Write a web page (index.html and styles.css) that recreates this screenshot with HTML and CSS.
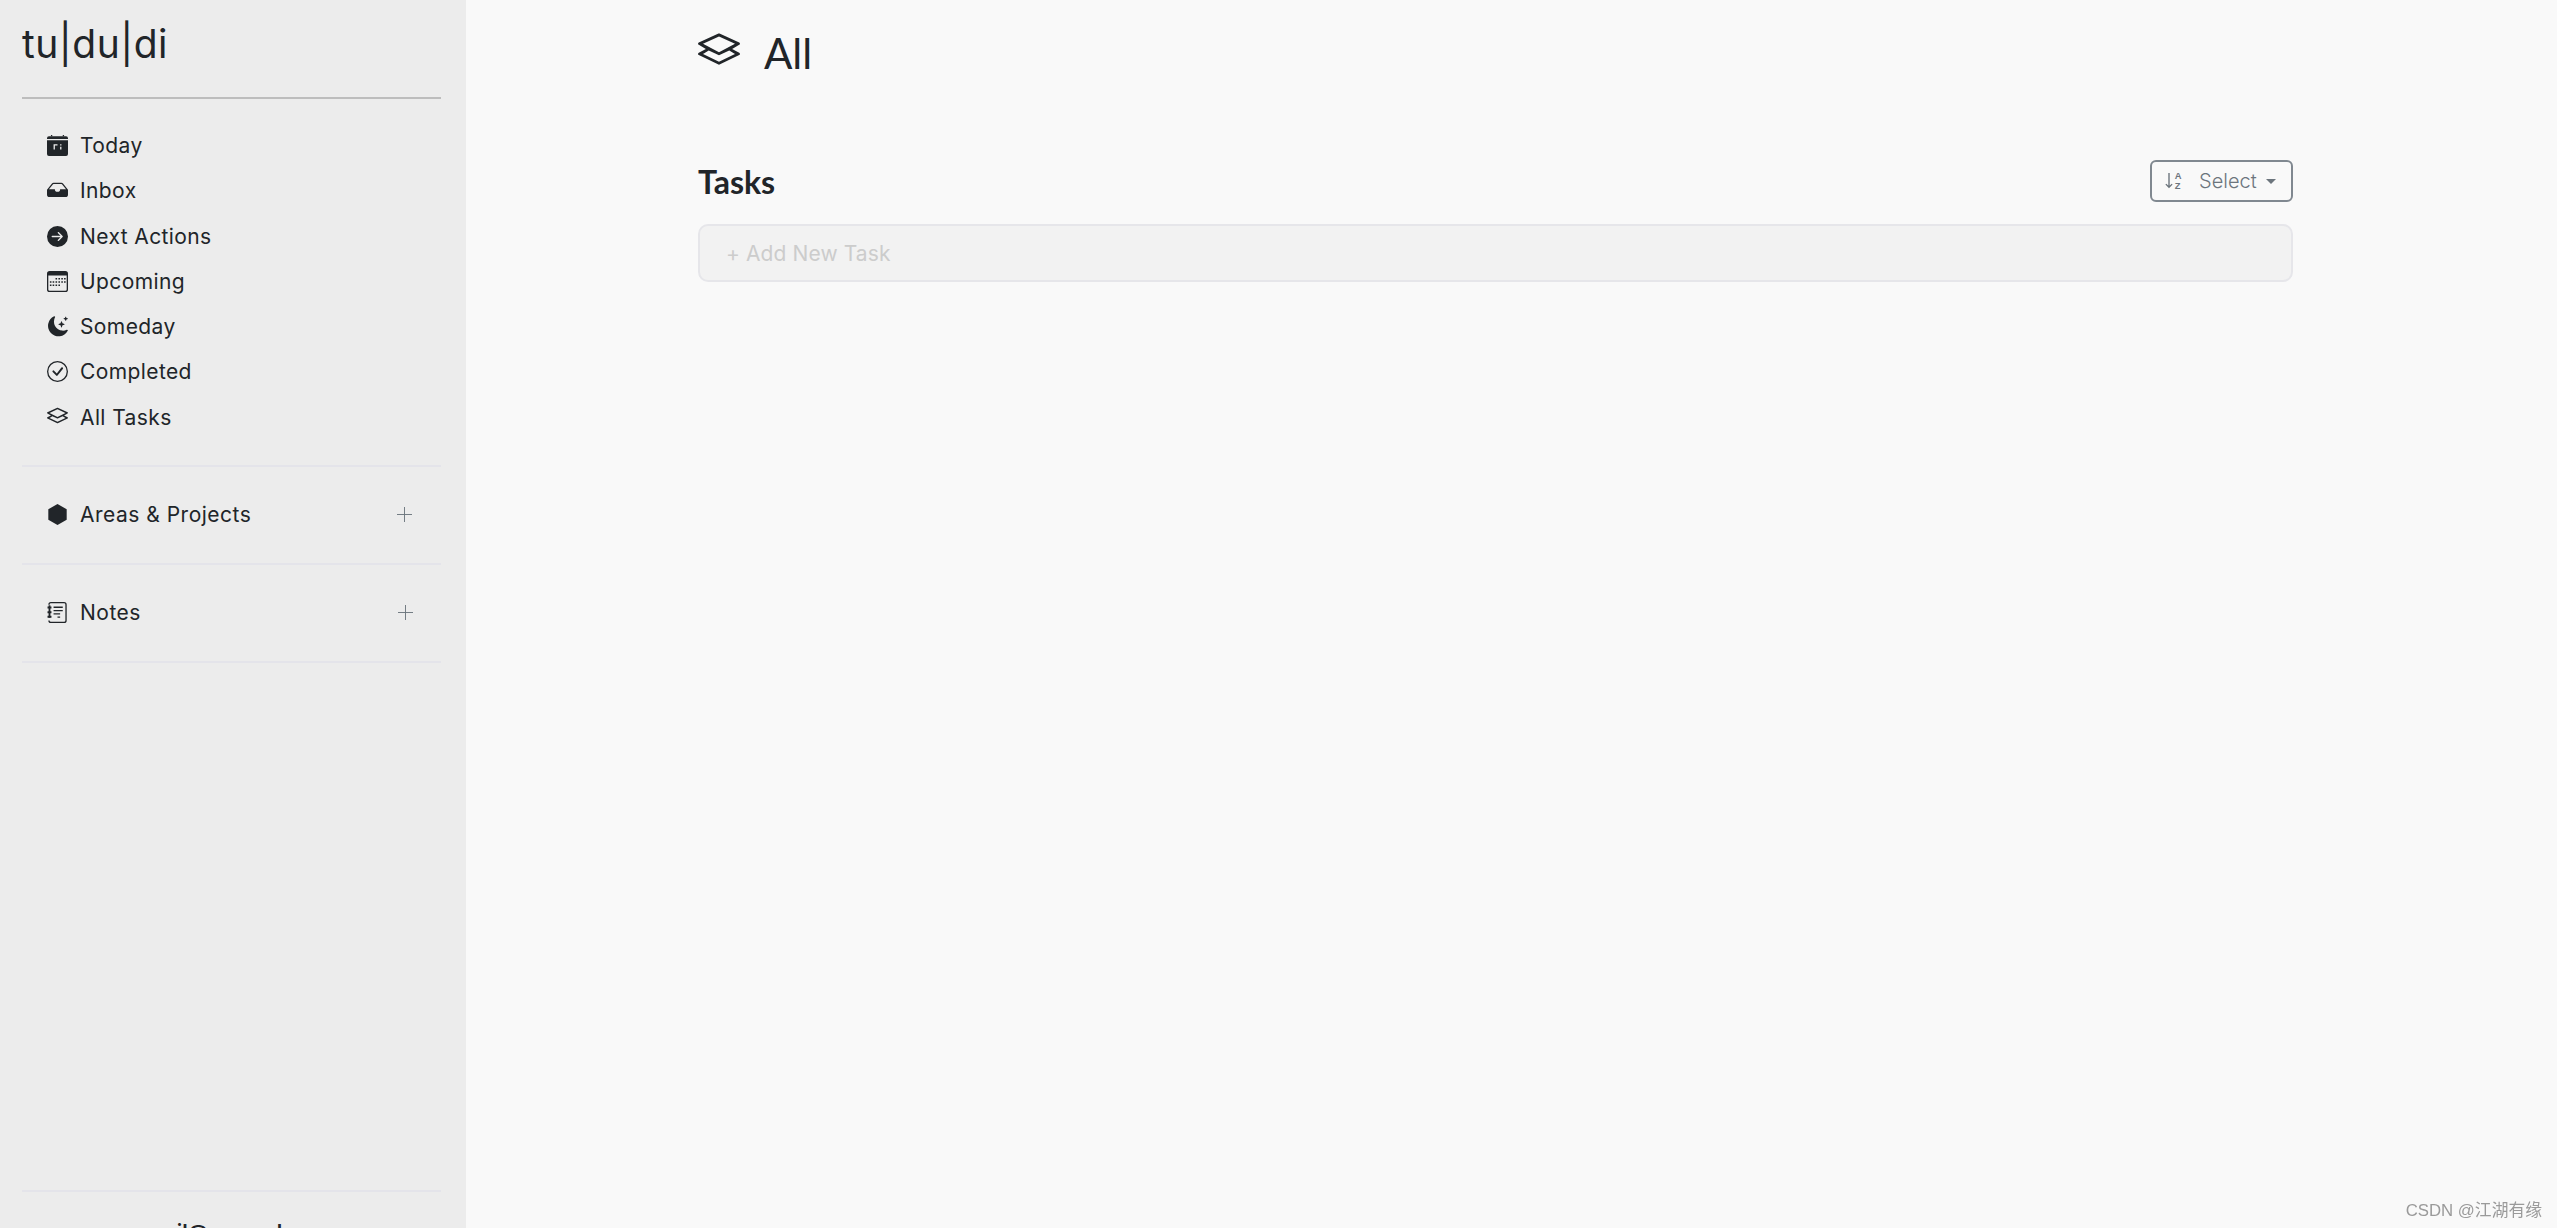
FILE: index.html
```html
<!DOCTYPE html>
<html lang="en">
<head>
  <meta charset="UTF-8">
  <title>tududi</title>
  <link rel="stylesheet" href="styles.css">
</head>
<body>
  <div class="app">
    <aside class="sidebar">
      <div class="logo">tu|du|di</div>
      <ul class="nav">
        <li class="nav-item">
          <svg class="icon" viewBox="0 0 16 16"><path d="M3 0h1v1H3zM12 0h1v1h-1z"/><path d="M0 2.500A1.500 1.500 0 0 1 1.500 1h13A1.500 1.500 0 0 1 16 2.500V3H0z"/><path fill-rule="evenodd" d="M0 4h16v10.500a1.500 1.500 0 0 1-1.500 1.500h-13A1.500 1.500 0 0 1 0 14.500zM5 7v4h1V8h2V7zM10 7v1h1V7zM10 9v2h1V9z"/></svg>
          <span>Today</span>
        </li>
        <li class="nav-item">
          <svg class="icon" viewBox="0 0 16 16"><path fill-rule="evenodd" d="M3.800 2.600A1.500 1.500 0 0 1 5 2h6a1.500 1.500 0 0 1 1.200.6L16 7.500V11a2 2 0 0 1-2 2H2a2 2 0 0 1-2-2V7.500zM5 3a.5.5 0 0 0-.4.2L1.500 7H6a2 2 0 0 0 4 0h4.500l-3.100-3.800A.5.5 0 0 0 11 3z"/></svg>
          <span>Inbox</span>
        </li>
        <li class="nav-item">
          <svg class="icon" viewBox="0 0 16 16"><path fill-rule="evenodd" d="M8 0a8 8 0 1 1 0 16A8 8 0 0 1 8 0zM4 7.500a.5.5 0 0 0 0 1h6.300l-2.100 2.150a.5.5 0 0 0 .7.7l3-3a.5.5 0 0 0 0-.7l-3-3a.5.5 0 0 0-.7.7l2.100 2.150z"/></svg>
          <span>Next Actions</span>
        </li>
        <li class="nav-item">
          <svg class="icon" viewBox="0 0 16 16"><path fill-rule="evenodd" d="M2 0h12a2 2 0 0 1 2 2v12a2 2 0 0 1-2 2H2a2 2 0 0 1-2-2V2a2 2 0 0 1 2-2zM1 3.500V14a1 1 0 0 0 1 1h12a1 1 0 0 0 1-1V3.500z"/><path d="M6.500 5.300h1.200v1.200H6.500zM8.700 5.300h1.200v1.200H8.700zM10.900 5.300h1.200v1.200h-1.200zM13 5.300h1.200v1.200H13zM2.200 7.800h1.200V9H2.200zM4.300 7.800h1.200V9H4.300zM6.500 7.800h1.200V9H6.500zM8.700 7.800h1.200V9H8.700zM10.900 7.800h1.200V9h-1.200zM13 7.800h1.200V9H13zM2.200 10.300h1.200v1.200H2.200zM4.300 10.300h1.200v1.200H4.300zM6.500 10.300h1.200v1.200H6.500zM8.700 10.300h1.200v1.200H8.700z"/></svg>
          <span>Upcoming</span>
        </li>
        <li class="nav-item">
          <svg class="icon" viewBox="0 0 16 16"><path d="M6 .3a.6.6 0 0 1 .1.7A7 7 0 0 0 5.300 4.300a6.800 6.800 0 0 0 9.700 6.200.6.600 0 0 1 .8.800A8 8 0 1 1 5.400.2.600.6 0 0 1 6 .3z"/><path d="M10.800 4.200a.3.300 0 0 1 .5 0l.5 1.400 1.400.5a.3.300 0 0 1 0 .5l-1.400.5-.5 1.400a.3.300 0 0 1-.5 0l-.5-1.400-1.400-.5a.3.300 0 0 1 0-.5l1.400-.5zM14 .5h.5l.3 1 1 .3v.5l-1 .3-.3 1H14l-.3-1-1-.3v-.5l1-.3z"/></svg>
          <span>Someday</span>
        </li>
        <li class="nav-item">
          <svg class="icon" viewBox="0 0 16 16"><path fill-rule="evenodd" d="M8 0a8 8 0 1 1 0 16A8 8 0 0 1 8 0zm0 1a7 7 0 1 0 0 14A7 7 0 0 0 8 1z"/><path d="M10.970 5.000a.75.75 0 0 1 1.070 1.050l-3.990 5a.75.75 0 0 1-1.080.020L4.320 8.420a.75.75 0 0 1 1.060-1.060l2.100 2.100 3.470-4.430z"/></svg>
          <span>Completed</span>
        </li>
        <li class="nav-item">
          <svg class="icon" viewBox="0 0 16 16"><path fill-rule="evenodd" d="M8.200.6a.5.5 0 0 0-.4 0L.3 4a.5.5 0 0 0 0 .9L3 6.500.3 7.900a.5.5 0 0 0 0 .9l7.500 3.600a.5.5 0 0 0 .4 0l7.500-3.600a.5.500 0 0 0 0-.9L13 6.500l2.700-1.600a.5.500 0 0 0 0-.9zM8 1.700l6.100 2.800L8 7.700 1.900 4.500zM4.100 7l3.700 1.800a.5.500 0 0 0 .4 0L11.900 7l2.200 1.400L8 11.300 1.900 8.400z"/></svg>
          <span>All Tasks</span>
        </li>
      </ul>
      <div class="section">
        <svg class="icon" viewBox="0 0 16 16"><path d="M8 0l7 4v8l-7 4-7-4V4z"/></svg>
        <span>Areas &amp; Projects</span>
        <svg class="plus" viewBox="0 0 16 16"><path d="M8 0v16M0 8h16"/></svg>
      </div>
      <div class="section">
        <svg class="icon" viewBox="0 0 16 16"><path fill-rule="evenodd" d="M3 0h10a2 2 0 0 1 2 2v12a2 2 0 0 1-2 2H3a2 2 0 0 1-2-2h1a1 1 0 0 0 1 1h10a1 1 0 0 0 1-1V2a1 1 0 0 0-1-1H3a1 1 0 0 0-1 1H1a2 2 0 0 1 2-2z"/><path d="M5 3.500h7v1H5zM5 6h7v1H5zM5 8.500h5v1H5zM8 11h2v1H8zM.4 3.500h3V5h-3zM.4 7h3v1.500h-3zM.4 10.500h3V12h-3z"/><path d="M1.200 2.500h1.400V12H1.200z"/></svg>
        <span>Notes</span>
        <svg class="plus plus-notes" viewBox="0 0 16 16"><path d="M8 0v16M0 8h16"/></svg>
      </div>
      <div class="sidebar-footer">mail@example.com</div>
    </aside>

    <main class="main">
      <div class="content">
        <div class="page-title">
          <svg class="title-icon" viewBox="0 0 16 16"><path fill-rule="evenodd" d="M8.200.6a.5.5 0 0 0-.4 0L.3 4a.5.5 0 0 0 0 .9L3 6.500.3 7.900a.5.5 0 0 0 0 .9l7.500 3.600a.5.5 0 0 0 .4 0l7.500-3.600a.5.500 0 0 0 0-.9L13 6.500l2.700-1.600a.5.500 0 0 0 0-.9zM8 1.700l6.100 2.800L8 7.700 1.900 4.500zM4.100 7l3.700 1.800a.5.500 0 0 0 .4 0L11.900 7l2.200 1.400L8 11.300 1.900 8.400z"/></svg>
          <h1>All</h1>
        </div>
        <div class="tasks-head">
          <h2>Tasks</h2>
          <button class="select-btn">
            <svg class="sort-icon" viewBox="0 0 16 16"><path d="M4 1.500v11.500M1.500 10.500L4 13l2.500-2.500" fill="none" stroke="currentColor" stroke-width="1.100"/><text x="8.500" y="6.500" class="sort-letter">A</text><text x="8.500" y="14" class="sort-letter">Z</text></svg>
            <span>Select</span>
            <i class="caret"></i>
          </button>
        </div>
        <div class="add-task">+ Add New Task</div>
      </div>
    </main>
  </div>
  <div class="watermark">CSDN @江湖有缘</div>
</body>
</html>
```

FILE: styles.css
```css
html, body {
  margin: 0;
  height: 100%;
  overflow: hidden;
}
body {
  background-color: #f9f9f9;
  font-family: 'Inter', 'Noto Sans', sans-serif;
  color: #212529;
}
.app {
  display: flex;
  height: 100vh;
}
.sidebar {
  width: 466px;
  flex-shrink: 0;
  box-sizing: border-box;
  padding: 0 25px 0 22px;
  background-color: #ececec;
  display: flex;
  flex-direction: column;
  overflow: hidden;
}
.logo {
  height: 99px;
  box-sizing: border-box;
  padding-top: 19px;
  border-bottom: 2px solid #bdbdbd;
  font-size: 39px;
  font-weight: 400;
  letter-spacing: 0.5px;
  line-height: 50px;
}
.nav {
  list-style: none;
  margin: 0;
  padding: 24px 25px 25px;
  border-bottom: 2px solid #e4e4ea;
}
.nav-item {
  height: 45.25px;
  display: flex;
  align-items: center;
  gap: 12px;
  font-size: 21px;
  letter-spacing: 0.4px;
  white-space: nowrap;
}
.icon {
  width: 21px;
  height: 21px;
  fill: #212529;
  flex-shrink: 0;
}
.section {
  height: 98px;
  box-sizing: border-box;
  padding: 0 25px;
  display: flex;
  align-items: center;
  gap: 12px;
  font-size: 21px;
  letter-spacing: 0.5px;
  border-bottom: 2px solid #e4e4ea;
  flex-shrink: 0;
}
.section span {
  flex: 1;
}
.plus {
  width: 15px;
  height: 15px;
  margin-right: 4px;
  fill: none;
  stroke: #6c757d;
  stroke-width: 1;
}
.plus-notes {
  margin-right: 3px;
}
.sidebar-footer {
  margin-top: auto;
  height: 38px;
  box-sizing: border-box;
  padding: 27px 0 0 28px;
  border-top: 2px solid #e4e4ea;
  text-align: center;
  font-size: 21px;
  font-weight: 600;
  line-height: 28px;
  flex-shrink: 0;
}
.main {
  flex: 1;
  padding-left: 232px;
}
.content {
  width: 1595px;
}
.page-title {
  height: 105px;
  display: flex;
  align-items: center;
  gap: 24px;
}
.title-icon {
  width: 42px;
  height: 42px;
  fill: #212529;
}
.page-title h1 {
  margin: 0;
  font-family: 'Lato', sans-serif;
  font-size: 42px;
  font-weight: 400;
}
.tasks-head {
  height: 70px;
  margin-top: 41px;
  display: flex;
  justify-content: space-between;
  align-items: center;
}
.tasks-head h2 {
  margin: 0;
  font-family: 'Lato', sans-serif;
  font-size: 32px;
  font-weight: 700;
}
.select-btn {
  width: 143px;
  height: 42px;
  box-sizing: border-box;
  padding: 0 12px;
  display: flex;
  align-items: center;
  background: none;
  border: 2px solid #808890;
  border-radius: 6px;
  color: #6c757d;
  font-family: 'Inter', sans-serif;
  font-size: 20px;
  font-weight: 300;
}
.sort-icon {
  width: 20px;
  height: 20px;
  flex-shrink: 0;
  margin-right: 15px;
}
.sort-letter {
  font-size: 7.500px;
  font-weight: 700;
  fill: currentColor;
  font-family: 'Liberation Sans', sans-serif;
}
.caret {
  width: 0;
  height: 0;
  margin-left: 9px;
  border-left: 5px solid transparent;
  border-right: 5px solid transparent;
  border-top: 5px solid #6c757d;
}
.add-task {
  height: 58px;
  box-sizing: border-box;
  margin-top: 8px;
  padding-left: 26px;
  display: flex;
  align-items: center;
  background-color: #f2f2f2;
  border: 2px solid #e6e6ea;
  border-radius: 10px;
  color: #cccccc;
  font-size: 21px;
  letter-spacing: 0.1px;
}
.watermark {
  position: fixed;
  right: 15px;
  bottom: 7px;
  font-family: 'Liberation Sans', 'Noto Sans CJK SC', sans-serif;
  font-size: 16.800px;
  color: #9a9a9a;
}
```
